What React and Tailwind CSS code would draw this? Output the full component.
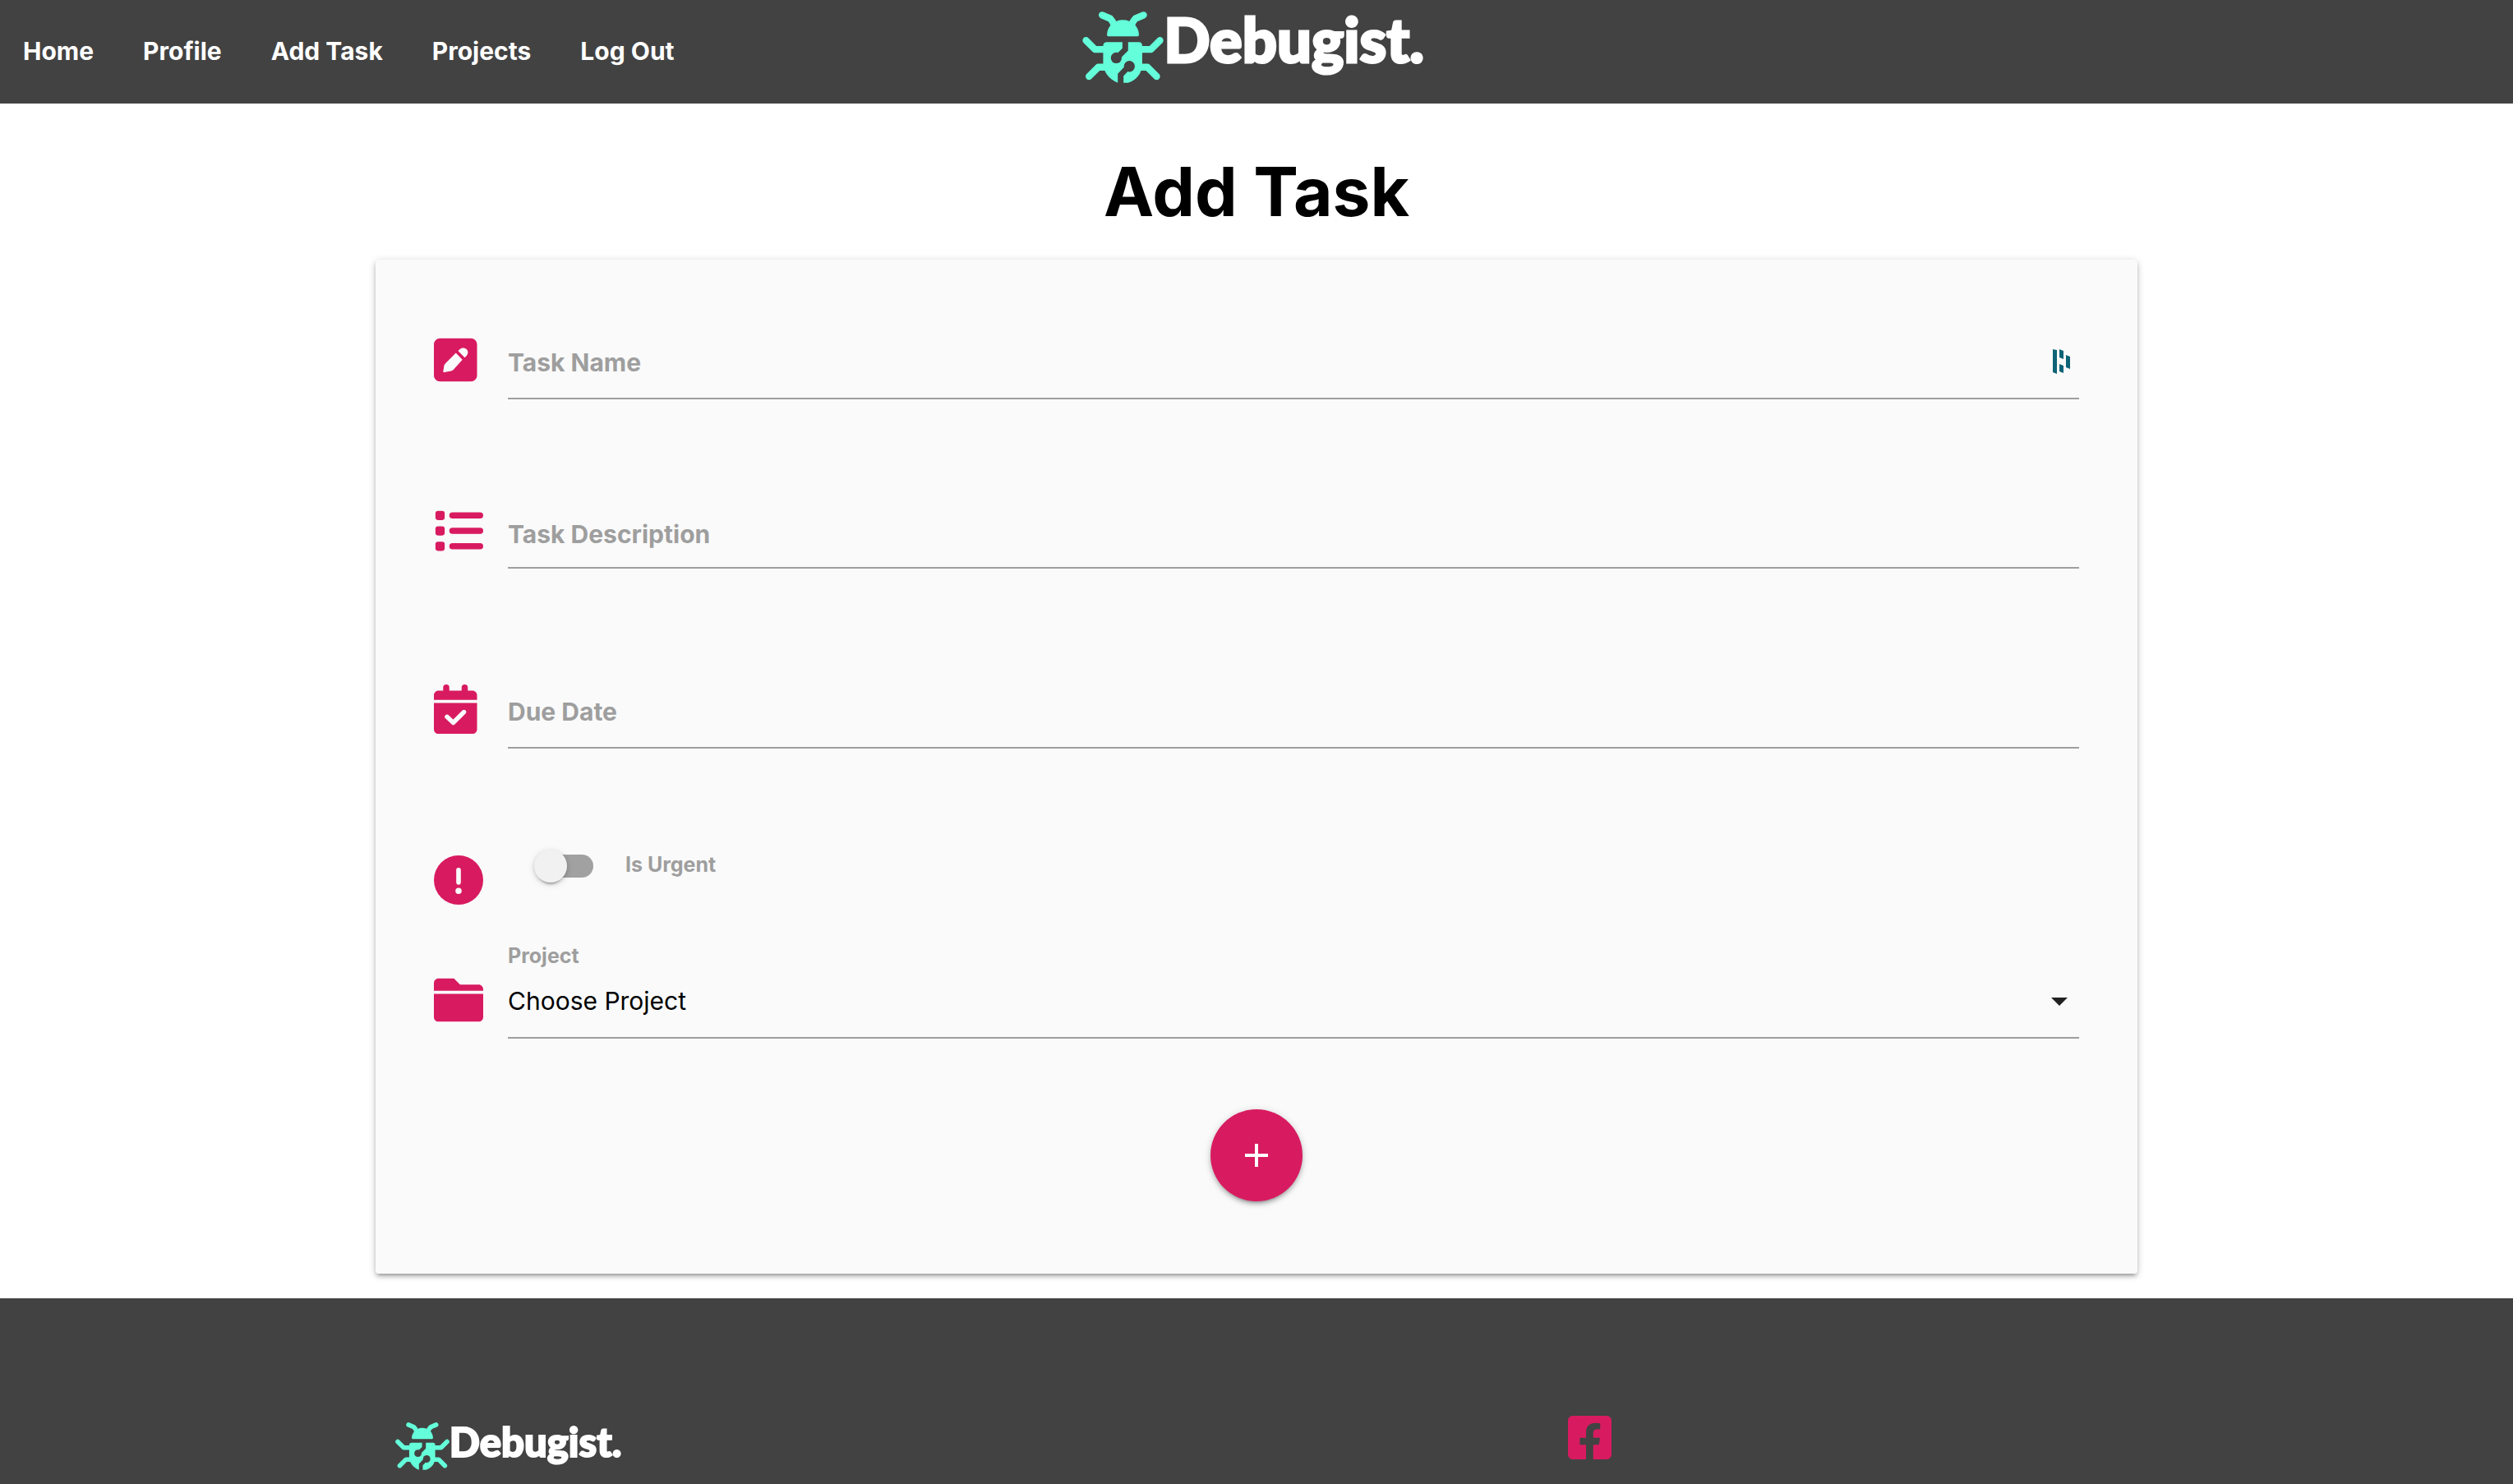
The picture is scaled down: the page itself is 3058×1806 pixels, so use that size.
import { useState } from "react";

const navLinks = ["Home", "Profile", "Add Task", "Projects", "Log Out"];

function Bug({ className }) {
  return (
    <svg viewBox="57 41 297 262" className={className} fill="none" aria-hidden="true">
      <g stroke="#64ffda" strokeLinecap="round" strokeLinejoin="round" strokeWidth="25">
        <path d="M129 54 L159 67 Q168 76 174 92" />
        <path d="M281 54 L251 67 Q242 76 236 92" />
        <path d="M70 147 L103 180 H140" />
        <path d="M341 147 L308 180 H270" />
        <path d="M81 279 L115 245 H145" />
        <path d="M329 279 L295 245 H265" />
      </g>
      <path d="M147 127 C147 96 172 72 205 72 S264 96 264 127 Q264 132 259 132 H152 Q147 132 147 127 Z" fill="#64ffda" />
      <path d="M147 153 H264 Q276 153 276 167 V232 C276 270 252 294 224 302 H187 C155 290 133 262 133 230 V167 Q133 153 147 153 Z" fill="#64ffda" />
      <path d="M214 140 V180 L188 206" stroke="#424242" strokeWidth="21" />
      <path d="M222 247 L197 273 V306" stroke="#424242" strokeWidth="21" />
      <circle cx="181" cy="211" r="20" fill="#424242" />
      <circle cx="229" cy="242" r="20" fill="#424242" />
    </svg>
  );
}

function PenSquareIcon() {
  return (
    <svg viewBox="0 0 512 512" className="size-15 fill-[#d81b60]" aria-hidden="true">
      <path
        fillRule="evenodd"
        d="M64 32H384C419 32 448 61 448 96V416C448 451 419 480 384 480H64C29 480 0 451 0 416V96C0 61 29 32 64 32ZM228 184L120 292C113 299 108 307 106 316L97 373C96 380 101 386 109 385L178 372C187 370 195 365 202 358L296 254ZM251 163L320 232L339 213C358 194 358 164 340 146C321 127 291 127 272 143Z"
      />
    </svg>
  );
}

function ListIcon() {
  return (
    <svg viewBox="0 0 512 512" className="size-15 fill-[#d81b60]" aria-hidden="true">
      {[48, 208, 368].map((y) => (
        <g key={y}>
          <rect x="16" y={y} width="96" height="96" rx="26" />
          <rect x="160" y={y + 16} width="352" height="64" rx="32" />
        </g>
      ))}
    </svg>
  );
}

function CalendarIcon() {
  return (
    <svg viewBox="0 0 512 512" className="size-15 fill-[#d81b60]" aria-hidden="true">
      <path d="M0 160V112C0 85 21 64 48 64H96V32A32 32 0 0 1 160 32V64H288V32A32 32 0 0 1 352 32V64H400C427 64 448 85 448 112V160ZM0 192H448V464C448 491 427 512 400 512H48C21 512 0 491 0 464Z" />
      <path d="M136 335L201 397L312 286" fill="none" stroke="#fafafa" strokeWidth="46" strokeLinecap="round" strokeLinejoin="round" />
    </svg>
  );
}

function UrgentIcon() {
  return (
    <svg viewBox="0 0 512 512" className="size-15 fill-[#d81b60]" aria-hidden="true">
      <circle cx="256" cy="256" r="256" />
      <rect x="232" y="128" width="48" height="176" rx="24" fill="#fafafa" />
      <circle cx="256" cy="368" r="32" fill="#fafafa" />
    </svg>
  );
}

function FolderIcon() {
  return (
    <svg viewBox="0 0 512 512" className="size-15 fill-[#d81b60]" aria-hidden="true">
      <path d="M0 160V80C0 53 21 32 48 32H208L272 96H464C491 96 512 117 512 144V160ZM0 192H512V432C512 459 491 480 464 480H48C21 480 0 459 0 432Z" />
    </svg>
  );
}

function PasswordManagerIcon() {
  return (
    <svg viewBox="0 0 21 30" className="h-[30px] w-[21px] fill-[#0e6377]" aria-hidden="true">
      <path d="M0 0L5 1V30L0 28Z M8 0L13 2V12L8 10Z M8 18L13 20V29L8 27Z M16 7L21 9V24L16 22Z" />
    </svg>
  );
}

function FacebookIcon() {
  return (
    <svg viewBox="0 0 448 448" className="size-[53px]" aria-hidden="true">
      <rect width="448" height="448" rx="48" fill="#d81b60" />
      <path d="M186 448V298H122V226H186V170C186 107 223 74 281 74C304 74 332 78 332 78V140H300C269 140 260 158 260 178V226H330L319 298H260V448Z" fill="#424242" />
    </svg>
  );
}

const fieldClass =
  "block h-24 w-full resize-none appearance-none rounded-none border-b-2 border-[#9e9e9e] bg-transparent text-[30px] leading-10 font-bold text-black outline-none placeholder:text-[#9e9e9e] placeholder:opacity-100";

export default function App() {
  const [urgent, setUrgent] = useState(false);
  return (
    <div className="flex min-h-screen flex-col bg-white font-['Inter',sans-serif] text-black">
      <header className="grid h-[126px] grid-cols-[1fr_auto_1fr] bg-[#424242] text-white">
        <nav className="flex items-center gap-15 pb-0.5 pl-7 text-[30px] font-bold">
          {navLinks.map((label) => (
            <a key={label} href="#" className="whitespace-nowrap">
              {label}
            </a>
          ))}
        </nav>
        <a href="#" className="flex items-start pt-3.5 pr-2" aria-label="Debugist home">
          <Bug className="h-[87px] w-[99px]" />
          <span className="font-['Lato',sans-serif] text-[74px] leading-[68px] font-black [-webkit-text-stroke:3px_white]">
            Debugist.
          </span>
        </a>
      </header>

      <main>
        <h1 className="mt-14 mb-[30px] text-center text-[82px] leading-[104px] font-bold">Add Task</h1>
        <form
          onSubmit={(e) => e.preventDefault()}
          className="mx-auto max-w-[2144px] rounded-sm bg-[#fafafa] px-[71px] pt-[74px] pb-22 shadow-[0_4px_4px_0_rgba(0,0,0,0.14),0_6px_2px_-4px_rgba(0,0,0,0.12),0_2px_10px_0_rgba(0,0,0,0.2)]"
        >
          <div className="flex items-center gap-[30px]">
            <PenSquareIcon />
            <div className="relative flex-1">
              <input type="text" aria-label="Task Name" placeholder="Task Name" className={`${fieldClass} pt-2`} />
              <span className="absolute top-[35px] right-[11px]">
                <PasswordManagerIcon />
              </span>
            </div>
          </div>

          <div className="mt-[110px] flex items-center gap-[30px]">
            <div className="pt-1">
              <ListIcon />
            </div>
            <div className="flex-1">
              <textarea aria-label="Task Description" placeholder="Task Description" className={`${fieldClass} overflow-hidden pt-[34px]`} />
            </div>
          </div>

          <div className="mt-[123px] flex items-center gap-[30px]">
            <CalendarIcon />
            <div className="flex-1">
              <input type="text" aria-label="Due Date" placeholder="Due Date" className={`${fieldClass} pt-2`} />
            </div>
          </div>

          <div className="mt-[123px] flex items-start gap-[30px]">
            <div className="pt-[7px]">
              <UrgentIcon />
            </div>
            <label className="flex h-10 items-center gap-[39px] pl-8">
              <input
                type="checkbox"
                checked={urgent}
                onChange={(e) => setUrgent(e.target.checked)}
                className="relative h-7 w-[72px] appearance-none rounded-full bg-[linear-gradient(to_right,transparent_20px,#a1a1a1_20px)] before:absolute before:top-1/2 before:left-0 before:size-10 before:-translate-y-1/2 before:rounded-full before:bg-[#f1f1f1] before:shadow-[0_6px_2px_-4px_rgba(0,0,0,0.2),0_2px_4px_0_rgba(0,0,0,0.14),0_2px_10px_0_rgba(0,0,0,0.12)] checked:before:left-8"
              />
              <span className="pb-1 text-[25px] leading-8 font-bold text-[#9e9e9e]">Is Urgent</span>
            </label>
          </div>

          <div className="mt-12 flex items-end gap-[30px]">
            <div className="pb-[17px]">
              <FolderIcon />
            </div>
            <div className="relative flex-1">
              <label htmlFor="project" className="block text-[25px] leading-7 font-bold text-[#9e9e9e]">
                Project
              </label>
              <select
                id="project"
                className="block h-[87px] w-full appearance-none border-b-2 border-[#9e9e9e] bg-transparent pb-0.5 text-[30px] outline-none"
              >
                <option>Choose Project</option>
              </select>
              <svg viewBox="0 0 20 10" className="pointer-events-none absolute right-3.5 bottom-10 h-2.5 w-5 fill-[#212121]" aria-hidden="true">
                <path d="M0 0H20L10 10Z" />
              </svg>
            </div>
          </div>

          <button
            type="submit"
            aria-label="Add"
            className="mx-auto mt-[86px] flex size-28 items-center justify-center rounded-full bg-[#d81b60] shadow-[0_4px_4px_0_rgba(0,0,0,0.14),0_6px_2px_-4px_rgba(0,0,0,0.12),0_2px_10px_0_rgba(0,0,0,0.2)]"
          >
            <svg viewBox="0 0 28 28" className="size-7 fill-white" aria-hidden="true">
              <path d="M12 0H16V12H28V16H16V28H12V16H0V12H12Z" />
            </svg>
          </button>
        </form>
      </main>

      <footer className="mt-[30px] flex-1 bg-[#424242] text-white">
        <div className="mx-auto grid w-[70%] grid-cols-3 pt-[143px]">
          <a href="#" className="flex h-[66px] items-start px-[22px] pt-2" aria-label="Debugist">
            <Bug className="h-[58px] w-[66px]" />
            <span className="font-['Lato',sans-serif] text-[49px] leading-[46px] font-black [-webkit-text-stroke:2px_white]">
              Debugist.
            </span>
          </a>
          <a href="#" className="col-start-3 px-[22px]" aria-label="Facebook">
            <FacebookIcon />
          </a>
        </div>
      </footer>
    </div>
  );
}
